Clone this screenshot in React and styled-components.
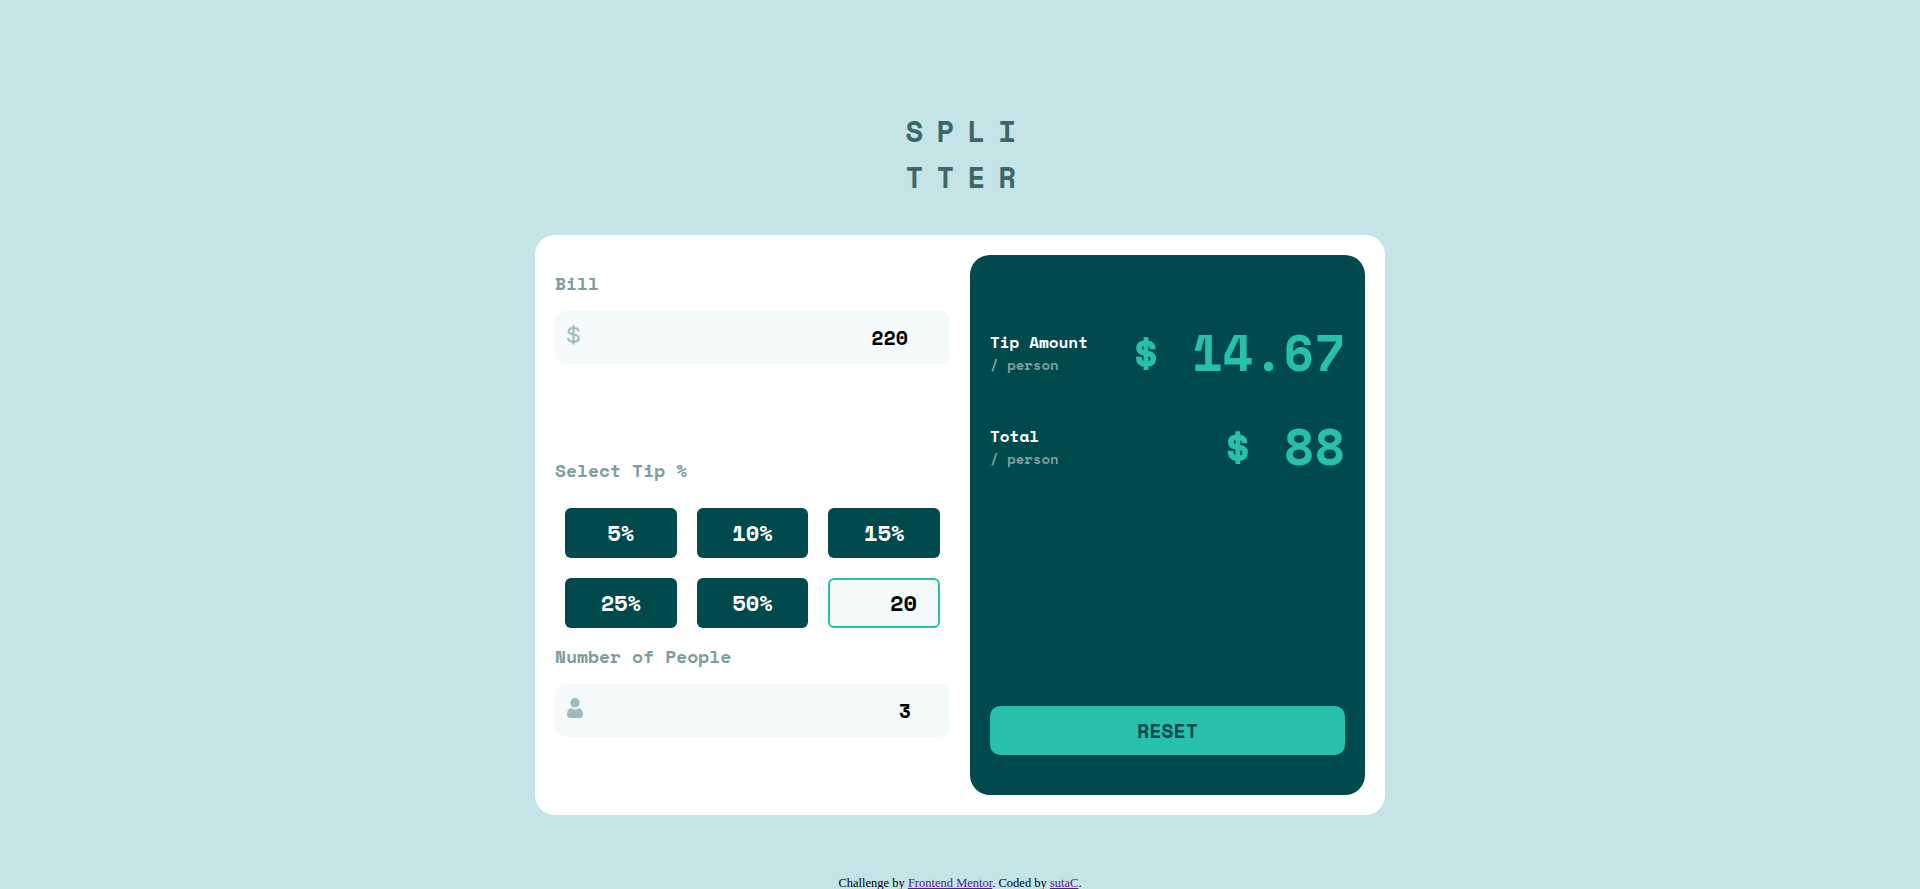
import React from "react";
import styled, { createGlobalStyle } from "styled-components";

const GlobalStyle = createGlobalStyle`
  *, *::before, *::after { box-sizing: border-box; }
  html, body { margin: 0; background: #c5e4e7; overflow: hidden; }
  h1, p { margin: 0; }
  button, input { font: inherit; margin: 0; }
`;

const Page = styled.div`
  height: 889px;
  overflow: hidden;
  display: flex;
  flex-direction: column;
  align-items: center;
  padding-top: 109px;
  background: #c5e4e7;
  font-family: "Space Mono", "DejaVu Sans Mono", "Liberation Mono", monospace;
  font-weight: 700;
`;

const Title = styled.h1`
  width: 109px;
  height: 126px;
  flex: none;
  font-size: 29px;
  line-height: 45.5px;
  letter-spacing: 13.2px;
  color: #3d6666;
  white-space: nowrap;
`;

const Card = styled.main`
  flex: none;
  width: 850px;
  height: 580px;
  padding: 20px;
  display: grid;
  grid-template-columns: 1fr 1fr;
  grid-template-rows: minmax(0, 1fr);
  gap: 20px;
  border-radius: 20px;
  background: #fff;
`;

const Form = styled.section`
  display: grid;
  grid-template-rows: repeat(3, minmax(0, 1fr));
  gap: 20px;
`;

const Group = styled.div`
  padding-top: 15px;
`;

const Label = styled.label`
  display: block;
  height: 41px;
  font-size: 18px;
  line-height: 27px;
  color: #7f9d9f;
`;

const Field = styled.div`
  display: flex;
  height: 53px;
  padding: 14px ${(p) => p.$end}px 0 12px;
  border-radius: 10px;
  background: #f4fafa;

  svg { flex: none; }
`;

const FieldInput = styled.input`
  flex: 1;
  min-width: 0;
  height: 24px;
  padding: 0;
  border: 0;
  outline: 0;
  background: transparent;
  color: #000;
  font-size: 20px;
  text-align: right;
`;

const TipGrid = styled.div`
  display: grid;
  grid-template-columns: repeat(3, minmax(0, 1fr));
  grid-auto-rows: 50px;
  gap: 20px;
  padding: 10px 10px 0;
`;

const TipButton = styled.button`
  padding: 0;
  border: 0;
  border-radius: 6px;
  background: #00494d;
  color: #fff;
  font-size: 22px;
`;

const CustomTip = styled.input`
  width: 100%;
  padding: 0 21px 0 0;
  border: 2px solid #26c0ab;
  border-radius: 6px;
  outline: 0;
  background: #f4fafa;
  color: #000;
  font-size: 22px;
  text-align: right;
`;

const Results = styled.section`
  display: flex;
  flex-direction: column;
  padding: 60px 20px 40px;
  border-radius: 20px;
  background: #00494d;
`;

const ResultRow = styled.div`
  display: flex;
  align-items: center;
  justify-content: space-between;
  height: 74px;
  margin-bottom: 20px;
`;

const ResultName = styled.p`
  font-size: 16px;
  line-height: 24px;
  color: #fff;
`;

const PerPerson = styled.p`
  font-size: 14px;
  line-height: 21px;
  color: #7f9d9f;
`;

const Amount = styled.p`
  font-size: 50px;
  line-height: 74px;
  color: #26c0ab;
`;

const Reset = styled.button`
  height: 49px;
  margin-top: auto;
  padding: 0;
  border: 0;
  border-radius: 10px;
  background: #26c0ab;
  color: #00494d;
  font-size: 20px;
`;

const Footer = styled.footer`
  flex: none;
  margin-top: 61px;
  font: 400 12.5px/15px "Liberation Serif", "Times New Roman", serif;
  color: #000;

  a { color: #551a8b; }
`;

const DollarIcon = () => (
  <svg width="13" height="20" viewBox="0 0 13 20" fill="none" stroke="#9ebbbd" strokeWidth="2.1">
    <path d="M6.5 .2v19.2M11.6 6.6C11.6 4.2 9.4 3 6.5 3S1.600 4.200 1.600 6.200c0 2.200 2 2.800 4.900 3.300s5.300 1.300 5.300 3.800c0 2.200-2.300 3.500-5.300 3.500s-5.400-1.300-5.400-3.800" />
  </svg>
);

const PersonIcon = () => (
  <svg width="16" height="20" viewBox="0 0 16 20" fill="#9ebbbd">
    <ellipse cx="8" cy="4.8" rx="4.7" ry="4.8" />
    <path d="M4.1 9.9C5.1 10.8 6.5 11.4 8 11.4s2.9-.6 3.9-1.5c2.7.6 4.1 3.2 4.1 6.7 0 2.3-1.2 3.4-3.2 3.4H3.2C1.2 20 0 18.9 0 16.6c0-3.5 1.4-6.1 4.1-6.7Z" />
  </svg>
);

const tips = [5, 10, 15, 25, 50];
const results = [
  { name: "Tip Amount", value: "14.67" },
  { name: "Total", value: "88" },
];

export default function App() {
  return (
    <>
      <GlobalStyle />
      <Page>
        <Title>SPLI<br />TTER</Title>
        <Card>
          <Form>
            <Group>
              <Label htmlFor="bill">Bill</Label>
              <Field $end={42}>
                <DollarIcon />
                <FieldInput id="bill" defaultValue="220" />
              </Field>
            </Group>
            <Group>
              <Label as="p">Select Tip %</Label>
              <TipGrid>
                {tips.map((tip) => <TipButton key={tip}>{tip}%</TipButton>)}
                <CustomTip aria-label="Custom tip" defaultValue="20" />
              </TipGrid>
            </Group>
            <Group>
              <Label htmlFor="people">Number of People</Label>
              <Field $end={39}>
                <PersonIcon />
                <FieldInput id="people" defaultValue="3" />
              </Field>
            </Group>
          </Form>
          <Results>
            {results.map(({ name, value }) => (
              <ResultRow key={name}>
                <div>
                  <ResultName>{name}</ResultName>
                  <PerPerson>/ person</PerPerson>
                </div>
                <Amount>$ {value}</Amount>
              </ResultRow>
            ))}
            <Reset>RESET</Reset>
          </Results>
        </Card>
        <Footer>
          Challenge by <a href="#mentor">Frontend Mentor</a>. Coded by <a href="#author">sutaC</a>.
        </Footer>
      </Page>
    </>
  );
}
